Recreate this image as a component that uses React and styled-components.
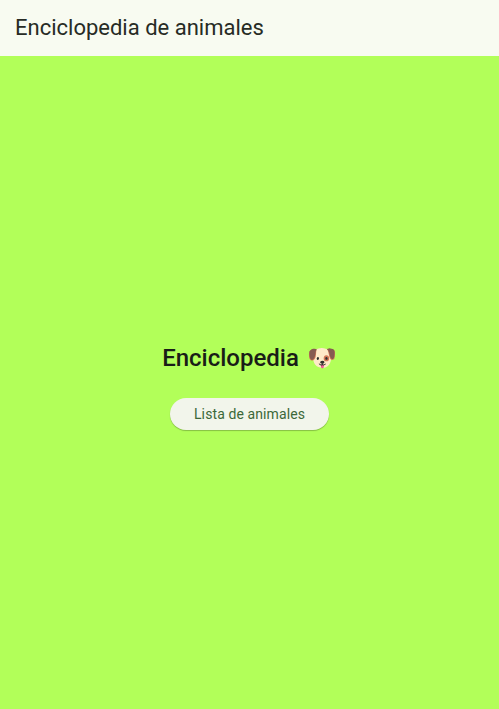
import React from "react";
import styled, { createGlobalStyle } from "styled-components";

const GlobalStyle = createGlobalStyle`
  body {
    margin: 0;
    font-family: Roboto, sans-serif;
    color: #191d17;
  }
`;

const Page = styled.div`
  display: flex;
  flex-direction: column;
  min-height: 100vh;
  background: #b2ff59;
`;

const AppBar = styled.header`
  display: flex;
  align-items: center;
  height: 56px;
  padding: 0 15px;
  background: #f8fbf1;
`;

const AppTitle = styled.h1`
  margin: 0;
  color: #272b25;
  font-size: 22px;
  line-height: 28px;
  font-weight: 400;
`;

const Content = styled.main`
  flex: 1;
  display: flex;
  flex-direction: column;
  align-items: center;
  justify-content: center;
  gap: 24px;
  padding-top: 6px;
`;

const Heading = styled.h2`
  display: flex;
  align-items: center;
  gap: 8px;
  margin: 0;
  font-size: 24px;
  line-height: 32px;
  font-weight: 500;
`;

const ListButton = styled.button`
  height: 32px;
  padding: 0 24px;
  border: 0;
  border-radius: 16px;
  background: #f2f5eb;
  color: #3c6839;
  font: 400 14px/20px Roboto, sans-serif;
  letter-spacing: 0.1px;
  box-shadow: 0 1px 1px rgba(0, 0, 0, 0.25);
  cursor: pointer;
`;

export default function App() {
  return (
    <>
      <GlobalStyle />
      <Page>
        <AppBar>
          <AppTitle>Enciclopedia de animales</AppTitle>
        </AppBar>
        <Content>
          <Heading>Enciclopedia <span>🐶</span></Heading>
          <ListButton type="button">Lista de animales</ListButton>
        </Content>
      </Page>
    </>
  );
}
